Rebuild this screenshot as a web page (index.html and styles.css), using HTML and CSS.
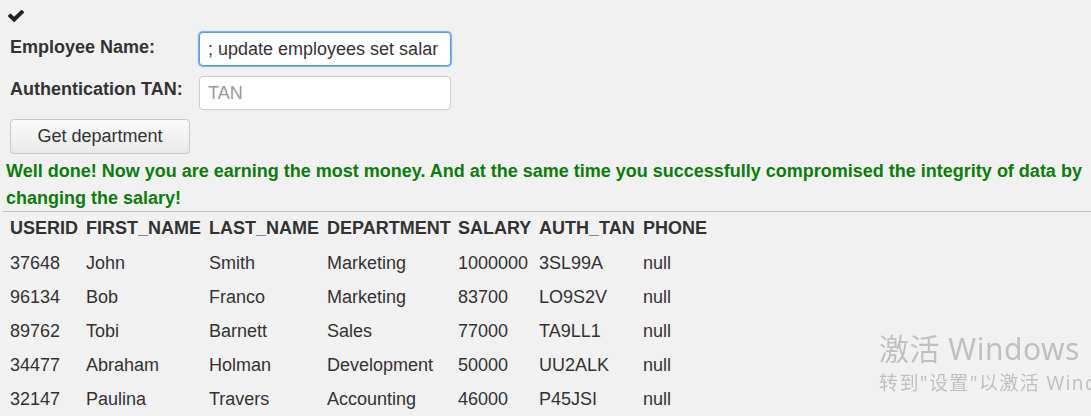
FILE: index.html
```html
<!DOCTYPE html>
<html lang="en">

<head>
    <meta charset="UTF-8">
    <title>SQL Injection</title>
    <link rel="stylesheet" href="styles.css">
</head>

<body>
    <div class="lesson">
        <div class="check">
            <svg width="16" height="12" viewBox="121 338 1550 1190" preserveAspectRatio="none">
                <path d="M1671 566q0 40-28 68l-724 724-136 136q-28 28-68 28t-68-28l-136-136-362-362q-28-28-28-68t28-68l136-136q28-28 68-28t68 28l294 295 656-657q28-28 68-28t68 28l136 136q28 28 28 68z" fill="#222" />
            </svg>
        </div>

        <form class="attack-form" autocomplete="off">
            <div class="form-row">
                <label for="name">Employee Name:</label>
                <input type="text" id="name" class="form-control focused" value="; update employees set salar">
            </div>
            <div class="form-row">
                <label for="auth_tan">Authentication TAN:</label>
                <input type="text" id="auth_tan" class="form-control" placeholder="TAN">
            </div>
            <button type="button" class="btn">Get department</button>
        </form>

        <div class="feedback">
            Well done! Now you are earning the most money. And at the same time you successfully compromised the integrity of data by changing the salary!
        </div>
        <hr>

        <table class="results">
            <tr>
                <th class="c1">USERID</th>
                <th class="c2">FIRST_NAME</th>
                <th class="c3">LAST_NAME</th>
                <th class="c4">DEPARTMENT</th>
                <th class="c5">SALARY</th>
                <th class="c6">AUTH_TAN</th>
                <th>PHONE</th>
            </tr>
            <tr>
                <td>37648</td><td>John</td><td>Smith</td><td>Marketing</td><td>1000000</td><td>3SL99A</td><td>null</td>
            </tr>
            <tr>
                <td>96134</td><td>Bob</td><td>Franco</td><td>Marketing</td><td>83700</td><td>LO9S2V</td><td>null</td>
            </tr>
            <tr>
                <td>89762</td><td>Tobi</td><td>Barnett</td><td>Sales</td><td>77000</td><td>TA9LL1</td><td>null</td>
            </tr>
            <tr>
                <td>34477</td><td>Abraham</td><td>Holman</td><td>Development</td><td>50000</td><td>UU2ALK</td><td>null</td>
            </tr>
            <tr>
                <td>32147</td><td>Paulina</td><td>Travers</td><td>Accounting</td><td>46000</td><td>P45JSI</td><td>null</td>
            </tr>
        </table>
    </div>

    <div class="watermark">
        <div class="wm-title">激活 Windows</div>
        <div class="wm-sub">转到"设置"以激活 Windows。</div>
    </div>
</body>

</html>
```

FILE: styles.css
```css
* {
    box-sizing: border-box;
}

html,
body {
    margin: 0;
    height: 100%;
    overflow: hidden;
}

body {
    background: #f1f1f1;
    font-family: "Liberation Sans", Arial, Helvetica, sans-serif;
    font-size: 18px;
    color: #333;
}

.lesson {
    padding-top: 10px;
}

.check {
    margin-left: 8px;
    height: 13px;
}

.check svg {
    display: block;
}

.attack-form {
    display: flex;
    flex-direction: column;
    align-items: flex-start;
    margin-top: 9px;
    padding-left: 10px;
}

.form-row {
    display: flex;
    align-items: flex-start;
    margin-bottom: 10px;
}

.form-row label {
    width: 189px;
    font-weight: bold;
    padding-top: 5px;
}

.form-row + .form-row label {
    padding-top: 3px;
}

.form-control {
    width: 252px;
    height: 34px;
    padding: 0 8px;
    font-family: inherit;
    font-size: 18px;
    color: #333;
    background: #fff;
    border: 1px solid #ccc;
    border-radius: 4px;
    outline: 0;
}

.form-control::placeholder {
    color: #999;
}

.form-control.focused {
    border-color: #5a9de0;
    box-shadow: 0 0 0 1px #7fb2e8, 0 0 3px rgba(102, 175, 233, 0.6);
}

.btn {
    width: 180px;
    height: 35px;
    margin-top: -1px;
    font-family: inherit;
    font-size: 18px;
    color: #333;
    background: linear-gradient(#fbfbfb, #e8e8e8);
    border: 1px solid #c8c8c8;
    border-radius: 4px;
}

.feedback {
    margin-top: 4px;
    padding-left: 6px;
    font-weight: bold;
    color: #0a7d0a;
    line-height: 27px;
}

hr {
    margin: -1px 0 0 3px;
    border: 0;
    border-top: 1px solid #c4c4c4;
}

.results {
    margin-left: 10px;
    border-collapse: collapse;
}

.results th,
.results td {
    padding: 0;
    text-align: left;
    white-space: nowrap;
}

.results th {
    height: 34px;
    padding-bottom: 2px;
}

.results td {
    height: 34px;
}

.c1 { width: 76px; }
.c2 { width: 123px; }
.c3 { width: 118px; }
.c4 { width: 131px; }
.c5 { width: 81px; }
.c6 { width: 104px; }

.watermark {
    position: fixed;
    left: 879px;
    top: 330px;
    color: rgba(120, 120, 120, 0.4);
    font-family: "Noto Sans", "Noto Sans CJK SC", sans-serif;
    white-space: nowrap;
}

.wm-title {
    font-size: 30px;
    letter-spacing: 0.5px;
    line-height: 38px;
}

.wm-sub {
    font-size: 19px;
    letter-spacing: 1.4px;
    line-height: 30px;
}
```
